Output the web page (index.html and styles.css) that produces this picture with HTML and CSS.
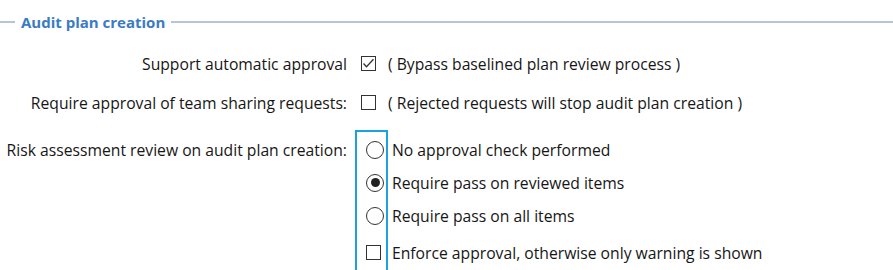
FILE: index.html
```html
<!DOCTYPE html>
<html lang="en">
<head>
  <meta charset="UTF-8">
  <title>Audit plan creation</title>
  <link rel="stylesheet" href="styles.css">
</head>
<body>
  <div class="group-title">
    <span class="rule rule-short"></span>
    <span class="title-text">Audit plan creation</span>
    <span class="rule"></span>
  </div>

  <div class="form">
    <div class="label">Support automatic approval</div>
    <div class="control">
      <span class="check checked">
        <svg viewBox="0 0 13 13"><path d="M1.5 6.5l3 3.2 7-7.4" fill="none" stroke="#333" stroke-width="1.3"/></svg>
      </span>
      <span class="hint">( Bypass baselined plan review process )</span>
    </div>

    <div class="label">Require approval of team sharing requests:</div>
    <div class="control">
      <span class="check"></span>
      <span class="hint">( Rejected requests will stop audit plan creation )</span>
    </div>

    <div class="label label-group">Risk assessment review on audit plan creation:</div>
    <div class="options">
      <div class="option-icons">
        <div class="opt"><span class="radio"></span></div>
        <div class="opt"><span class="radio selected"></span></div>
        <div class="opt"><span class="radio"></span></div>
        <div class="opt opt-last"><span class="check"></span></div>
      </div>
      <div class="option-texts">
        <div class="opt">No approval check performed</div>
        <div class="opt">Require pass on reviewed items</div>
        <div class="opt">Require pass on all items</div>
        <div class="opt opt-last">Enforce approval, otherwise only warning is shown</div>
      </div>
    </div>
  </div>
</body>
</html>
```

FILE: styles.css
```css
* {
  box-sizing: border-box;
  margin: 0;
  padding: 0;
}

body {
  font-family: 'Open Sans', 'Noto Sans', sans-serif;
  font-size: 15.7px;
  color: #161616;
  background-color: #fff;
  overflow: hidden;
}

.group-title {
  height: 44px;
  display: flex;
  align-items: center;
  gap: 6px;
}

.rule {
  flex: 1;
  height: 2px;
  background-color: #b7c4de;
}

.rule-short {
  flex: 0 0 15px;
}

.title-text {
  color: #3a7bc2;
  font-weight: 700;
  font-size: 15px;
}

.form {
  display: grid;
  grid-template-columns: 347px 1fr;
  column-gap: 8px;
}

.label {
  height: 39px;
  display: flex;
  align-items: center;
  justify-content: flex-end;
  white-space: nowrap;
}

.label-group {
  margin-top: 8px;
  padding-top: 3px;
  height: 36px;
}

.control {
  height: 39px;
  display: flex;
  align-items: center;
  gap: 12px;
  padding-left: 6px;
  white-space: nowrap;
}

.check {
  width: 15px;
  height: 15px;
  border: 1px solid #333;
  background-color: #fff;
  display: inline-flex;
  flex-shrink: 0;
}

.check svg {
  width: 13px;
  height: 13px;
}

.radio {
  width: 18px;
  height: 18px;
  border: 1px solid #333;
  border-radius: 50%;
  display: inline-flex;
  align-items: center;
  justify-content: center;
}

.radio.selected::after {
  content: "";
  width: 9px;
  height: 9px;
  border-radius: 50%;
  background-color: #222;
}

.options {
  margin-top: 8px;
  display: flex;
  gap: 4px;
}

.option-icons {
  border: 2px solid #1ba1e2;
  border-bottom: none;
  padding: 1px 2px 0 9px;
  height: 150px;
}

.option-texts {
  padding-top: 3px;
  white-space: nowrap;
}

.opt {
  height: 33px;
  display: flex;
  align-items: center;
}

.opt-last {
  margin-top: 4px;
}
```
